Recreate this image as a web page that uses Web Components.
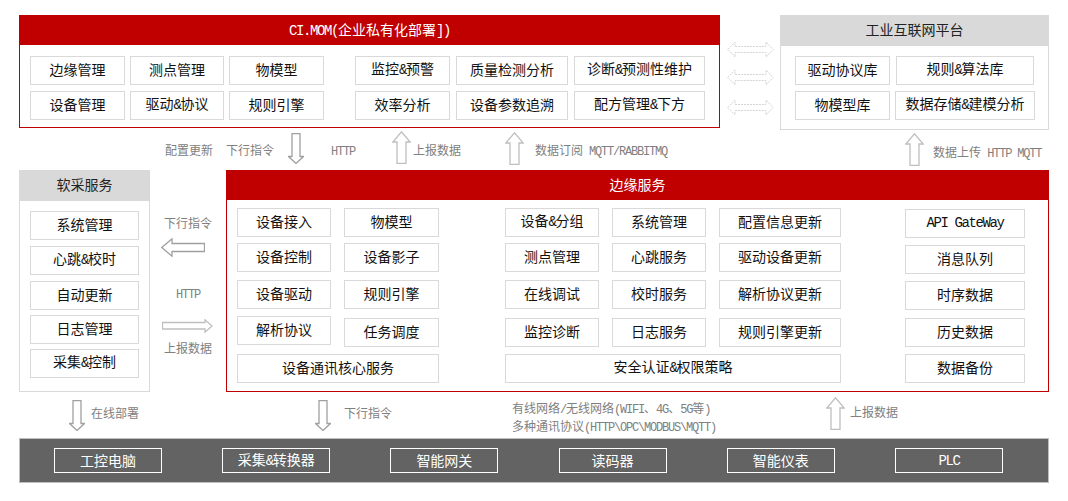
<!DOCTYPE html>
<html lang="zh">
<head>
<meta charset="utf-8">
<title>CI.MOM</title>
<style>
  html, body { margin: 0; background: #fff; }
  body { font-family: "Noto Sans CJK SC", "Liberation Sans", sans-serif; font-size: 14px; }
  i { font-style: normal; }
</style>
</head>
<body>

<arch-page>
  <arch-row slot="top" style="--row-h:115px">
    <arch-panel heading="CI.MOM(企业私有化部署])" tone="red" style="--w:701px;--h:113px">
      <tile-group style="--cols:95px 94px 95px;--rows:35px 29px;--pad:11px 0 0 10px">
        <arch-tile>边缘管理</arch-tile><arch-tile>测点管理</arch-tile><arch-tile>物模型</arch-tile>
        <arch-tile>设备管理</arch-tile><arch-tile>驱动<i>&amp;</i>协议</arch-tile><arch-tile>规则引擎</arch-tile>
      </tile-group>
      <tile-group style="--cols:95px 112px 131px;--rows:35px 29px;--pad:11px 0 0 31px;--gap:6px">
        <arch-tile>监控<i>&amp;</i>预警</arch-tile><arch-tile>质量检测分析</arch-tile><arch-tile>诊断<i>&amp;</i>预测性维护</arch-tile>
        <arch-tile>效率分析</arch-tile><arch-tile>设备参数追溯</arch-tile><arch-tile>配方管理<i>&amp;</i>下方</arch-tile>
      </tile-group>
    </arch-panel>
    <link-column style="--w:60px">
      <dbl-arrow></dbl-arrow><dbl-arrow></dbl-arrow><dbl-arrow style="margin-top:2px"></dbl-arrow>
    </link-column>
    <arch-panel heading="工业互联网平台" tone="gray" style="--w:269px">
      <tile-group style="--cols:95px 140px;--rows:35px 29px;--pad:10px 0 0 14px">
        <arch-tile>驱动协议库</arch-tile><arch-tile style="margin:0 1px">规则<i>&amp;</i>算法库</arch-tile>
        <arch-tile>物模型库</arch-tile><arch-tile>数据存储<i>&amp;</i>建模分析</arch-tile>
      </tile-group>
    </arch-panel>
  </arch-row>

  <flow-strip slot="upper" style="--h:40px">
    <flow-label style="--ml:146px;--mt:12px">配置更新</flow-label>
    <flow-label style="--ml:13px;--mt:12px">下行指令</flow-label>
    <flow-arrow dir="down" style="--ml:14px;--mt:3px"></flow-arrow>
    <flow-label style="--ml:27px;--mt:12px"><i>HTTP</i></flow-label>
    <flow-arrow dir="up" style="--ml:37px;--mt:1px"></flow-arrow>
    <flow-label style="--ml:2px;--mt:12px">上报数据</flow-label>
    <flow-arrow dir="up" style="--ml:44px;--mt:2px"></flow-arrow>
    <flow-label style="--ml:11px;--mt:12px">数据订阅<i> MQTT/RABBITMQ</i></flow-label>
    <flow-arrow dir="up" style="--ml:238px;--mt:3px"></flow-arrow>
    <flow-label style="--ml:9px;--mt:14px">数据上传<i> HTTP MQTT</i></flow-label>
  </flow-strip>

  <arch-row slot="middle" style="--row-h:222px">
    <arch-panel heading="软采服务" tone="gray" style="--w:131px">
      <tile-group style="--cols:109px;--rows:35px 35px 34px 34px 29px;--pad:10px 0 0 10px">
        <arch-tile>系统管理</arch-tile><arch-tile>心跳<i>&amp;</i>校时</arch-tile><arch-tile>自动更新</arch-tile>
        <arch-tile>日志管理</arch-tile><arch-tile>采集<i>&amp;</i>控制</arch-tile>
      </tile-group>
    </arch-panel>
    <side-links style="--w:76px">
      <flow-label>下行指令</flow-label>
      <flow-arrow dir="left" style="--mt:8px;--mr:10px"></flow-arrow>
      <flow-label style="--mt:28px"><i>HTTP</i></flow-label>
      <flow-arrow dir="right" style="--mt:16px;--mr:1px"></flow-arrow>
      <flow-label style="--mt:7px">上报数据</flow-label>
    </side-links>
    <arch-panel heading="边缘服务" tone="red" style="--w:823px">
      <tile-group style="--cols:94px 95px;--rows:35px 37px 36px 38px 29px;--pad:8px 0 0 10px;--gap:13px">
        <arch-tile>设备接入</arch-tile><arch-tile>物模型</arch-tile>
        <arch-tile>设备控制</arch-tile><arch-tile>设备影子</arch-tile>
        <arch-tile>设备驱动</arch-tile><arch-tile>规则引擎</arch-tile>
        <arch-tile>解析协议</arch-tile><arch-tile style="margin-top:2px">任务调度</arch-tile>
        <arch-tile style="grid-column:1 / 3">设备通讯核心服务</arch-tile>
      </tile-group>
      <tile-group style="--cols:94px 94px 122px;--rows:35px 37px 38px 36px 29px;--pad:8px 0 0 66px;--gap:13px">
        <arch-tile>设备<i>&amp;</i>分组</arch-tile><arch-tile>系统管理</arch-tile><arch-tile>配置信息更新</arch-tile>
        <arch-tile>测点管理</arch-tile><arch-tile>心跳服务</arch-tile><arch-tile>驱动设备更新</arch-tile>
        <arch-tile>在线调试</arch-tile><arch-tile>校时服务</arch-tile><arch-tile>解析协议更新</arch-tile>
        <arch-tile>监控诊断</arch-tile><arch-tile>日志服务</arch-tile><arch-tile>规则引擎更新</arch-tile>
        <arch-tile style="grid-column:1 / 4">安全认证<i>&amp;</i>权限策略</arch-tile>
      </tile-group>
      <tile-group style="--cols:120px;--rows:36px 36px 37px 36px 29px;--pad:9px 0 0 64px">
        <arch-tile><i>API GateWay</i></arch-tile>
        <arch-tile>消息队列</arch-tile>
        <arch-tile>时序数据</arch-tile>
        <arch-tile>历史数据</arch-tile>
        <arch-tile>数据备份</arch-tile>
      </tile-group>
    </arch-panel>
  </arch-row>

  <flow-strip slot="lower" style="--h:46px">
    <flow-arrow dir="down" style="--ml:50px;--mt:8px"></flow-arrow>
    <flow-label style="--ml:6px;--mt:13px">在线部署</flow-label>
    <flow-arrow dir="down" style="--ml:176px;--mt:8px"></flow-arrow>
    <flow-label style="--ml:13px;--mt:13px">下行指令</flow-label>
    <flow-label style="--ml:120px;--mt:8px">有线网络<i>/</i>无线网络<i>(WIFI</i>、<i>4G</i>、<i>5G</i>等<i>)</i><br>多种通讯协议<i>(HTTP\OPC\MODBUS\MQTT)</i></flow-label>
    <flow-arrow dir="up" style="--ml:110px;--mt:5px"></flow-arrow>
    <flow-label style="--ml:5px;--mt:12px">上报数据</flow-label>
  </flow-strip>

  <device-bar slot="bottom">
    <device-box style="--w:108px">工控电脑</device-box>
    <device-box style="--w:108px">采集<i>&amp;</i>转换器</device-box>
    <device-box style="--w:108px">智能网关</device-box>
    <device-box style="--w:108px">读码器</device-box>
    <device-box style="--w:108px">智能仪表</device-box>
    <device-box style="--w:108px"><i>PLC</i></device-box>
  </device-bar>
</arch-page>

<script>
function shadow(el, html) {
  el.attachShadow({ mode: 'open' }).innerHTML = html;
}

// latin letters and & are half width in the picture
const LATIN = `::slotted(i) { font-family: "Liberation Mono", monospace; font-size: 14px; letter-spacing: -1.4px; }`;

class ArchPage extends HTMLElement {
  constructor() {
    super();
    shadow(this, `
      <style>:host { display: block; width: 1030px; padding: 15px 0 0 19px; }</style>
      <slot name="top"></slot><slot name="upper"></slot><slot name="middle"></slot><slot name="lower"></slot><slot name="bottom"></slot>`);
  }
}

class ArchRow extends HTMLElement {
  constructor() {
    super();
    shadow(this, `
      <style>:host { display: flex; height: var(--row-h); align-items: flex-start; }</style>
      <slot></slot>`);
  }
}

class ArchPanel extends HTMLElement {
  static get observedAttributes() { return ['heading']; }
  constructor() {
    super();
    shadow(this, `
      <style>
        :host { display: flex; flex-direction: column; box-sizing: border-box; flex: none; width: var(--w); height: var(--h, 100%); border: 1px solid #d9d9d9; color: #111; }
        :host([tone=red]) { border-color: #c00000; }
        :host([tone=red]) header { background: #c00000; color: #fff; height: 30px; line-height: 28px; }
        header { flex: none; height: 31px; margin: -1px -1px 0; background: #d9d9d9; text-align: center; font: 14px/29px "Noto Sans CJK SC", sans-serif; color: #222; }
        header i { font-style: normal; font-family: "Liberation Mono", monospace; font-size: 14px; letter-spacing: -1.400px; }
        .body { display: flex; align-items: flex-start; }
      </style>
      <header></header>
      <div class="body"><slot></slot></div>`);
  }
  attributeChangedCallback(n, o, v) {
    this.shadowRoot.querySelector('header').innerHTML = v.replace(/[\x21-\x7e]+/g, m => `<i>${m}</i>`);
  }
}

class TileGroup extends HTMLElement {
  constructor() {
    super();
    shadow(this, `
      <style>
        :host { display: grid; flex: none; padding: var(--pad, 0); grid-template-columns: var(--cols); grid-template-rows: var(--rows); column-gap: var(--gap, 5px); }
      </style>
      <slot></slot>`);
  }
}

class ArchTile extends HTMLElement {
  constructor() {
    super();
    shadow(this, `
      <style>
        :host { display: flex; align-items: center; justify-content: center; box-sizing: border-box; height: 29px; padding-bottom: 3px; border: 1px solid #d9d9d9; background: #fff; color: #111; font: 14px/1.2 "Noto Sans CJK SC", sans-serif; white-space: nowrap; }
        ${LATIN}
      </style>
      <span><slot></slot></span>`);
  }
}

class FlowStrip extends HTMLElement {
  constructor() {
    super();
    shadow(this, `
      <style>:host { display: flex; align-items: flex-start; height: var(--h); }</style>
      <slot></slot>`);
  }
}

class FlowLabel extends HTMLElement {
  constructor() {
    super();
    shadow(this, `
      <style>
        :host { display: block; flex: none; margin: var(--mt, 0) 0 0 var(--ml, 0); color: #808080; font: 12px/15px "Noto Sans CJK SC", sans-serif; white-space: nowrap; }
        ::slotted(i) { font-family: "Liberation Mono", monospace; font-size: 12px; letter-spacing: -1.2px; }
      </style>
      <slot></slot>`);
  }
}

const ARROWS = {
  down: ['0 0 16 31', 'M4 .5h8v23h3.500L8 30.500 .5 23.500H4z'],
  up: ['0 0 19 33', 'M5 32.500V11H.8L9.500 .8 18.200 11H14v21.500z'],
  left: ['0 0 44 19', 'M43.500 5.500H11V.8L.8 9.500 11 18.200V13.500h32.500z'],
  right: ['0 0 51 14', 'M.5 3.500H43V.8L50 7 43 13.200V10H.5z']
};

class FlowArrow extends HTMLElement {
  constructor() {
    super();
    const dir = this.getAttribute('dir');
    const [box, d] = ARROWS[dir];
    const [, , w, h] = box.split(' ');
    const tone = dir === 'up' || dir === 'right' ? '#bfbfbf' : '#a0a0a0';
    shadow(this, `
      <style>:host { display: block; flex: none; margin: var(--mt, 0) var(--mr, 0) 0 var(--ml, 0); line-height: 0; } svg { display: block; }</style>
      <svg width="${w}" height="${h}" viewBox="${box}"><path d="${d}" fill="#fff" stroke="${tone}" stroke-width="1.300"/></svg>`);
  }
}

class DblArrow extends HTMLElement {
  constructor() {
    super();
    shadow(this, `
      <style>:host { display: block; width: 47px; height: 17px; line-height: 0; }</style>
      <svg width="47" height="17" viewBox="0 0 47 17"><path d="M.8 8.500 8 1v4.500h31V1l7.200 7.500L39 16v-4.500H8V16z" fill="#fff" stroke="#d4d4d4" stroke-dasharray="2 1"/></svg>`);
  }
}

class LinkColumn extends HTMLElement {
  constructor() {
    super();
    shadow(this, `
      <style>:host { display: flex; flex-direction: column; align-items: center; gap: 11px; flex: none; width: var(--w); padding-top: 26px; }</style>
      <slot></slot>`);
  }
}

class SideLinks extends HTMLElement {
  constructor() {
    super();
    shadow(this, `
      <style>:host { display: flex; flex-direction: column; align-items: center; flex: none; width: var(--w); padding-top: 45px; }</style>
      <slot></slot>`);
  }
}

class DeviceBar extends HTMLElement {
  constructor() {
    super();
    shadow(this, `
      <style>:host { display: flex; justify-content: space-between; box-sizing: border-box; width: 1030px; height: 45px; padding: 9px 45px 0 34px; background: #636363; border: 1px solid #bfbfbf; }</style>
      <slot></slot>`);
  }
}

class DeviceBox extends HTMLElement {
  constructor() {
    super();
    shadow(this, `
      <style>
        :host { display: flex; align-items: center; justify-content: center; box-sizing: border-box; width: var(--w); height: 25px; padding-bottom: 1px; border: 1px solid #fff; color: #fff; font: 14px/1.2 "Noto Sans CJK SC", sans-serif; }
        ${LATIN}
      </style>
      <span><slot></slot></span>`);
  }
}

customElements.define('arch-page', ArchPage);
customElements.define('arch-row', ArchRow);
customElements.define('arch-panel', ArchPanel);
customElements.define('tile-group', TileGroup);
customElements.define('arch-tile', ArchTile);
customElements.define('flow-strip', FlowStrip);
customElements.define('flow-label', FlowLabel);
customElements.define('flow-arrow', FlowArrow);
customElements.define('dbl-arrow', DblArrow);
customElements.define('link-column', LinkColumn);
customElements.define('side-links', SideLinks);
customElements.define('device-bar', DeviceBar);
customElements.define('device-box', DeviceBox);
</script>
</body>
</html>
